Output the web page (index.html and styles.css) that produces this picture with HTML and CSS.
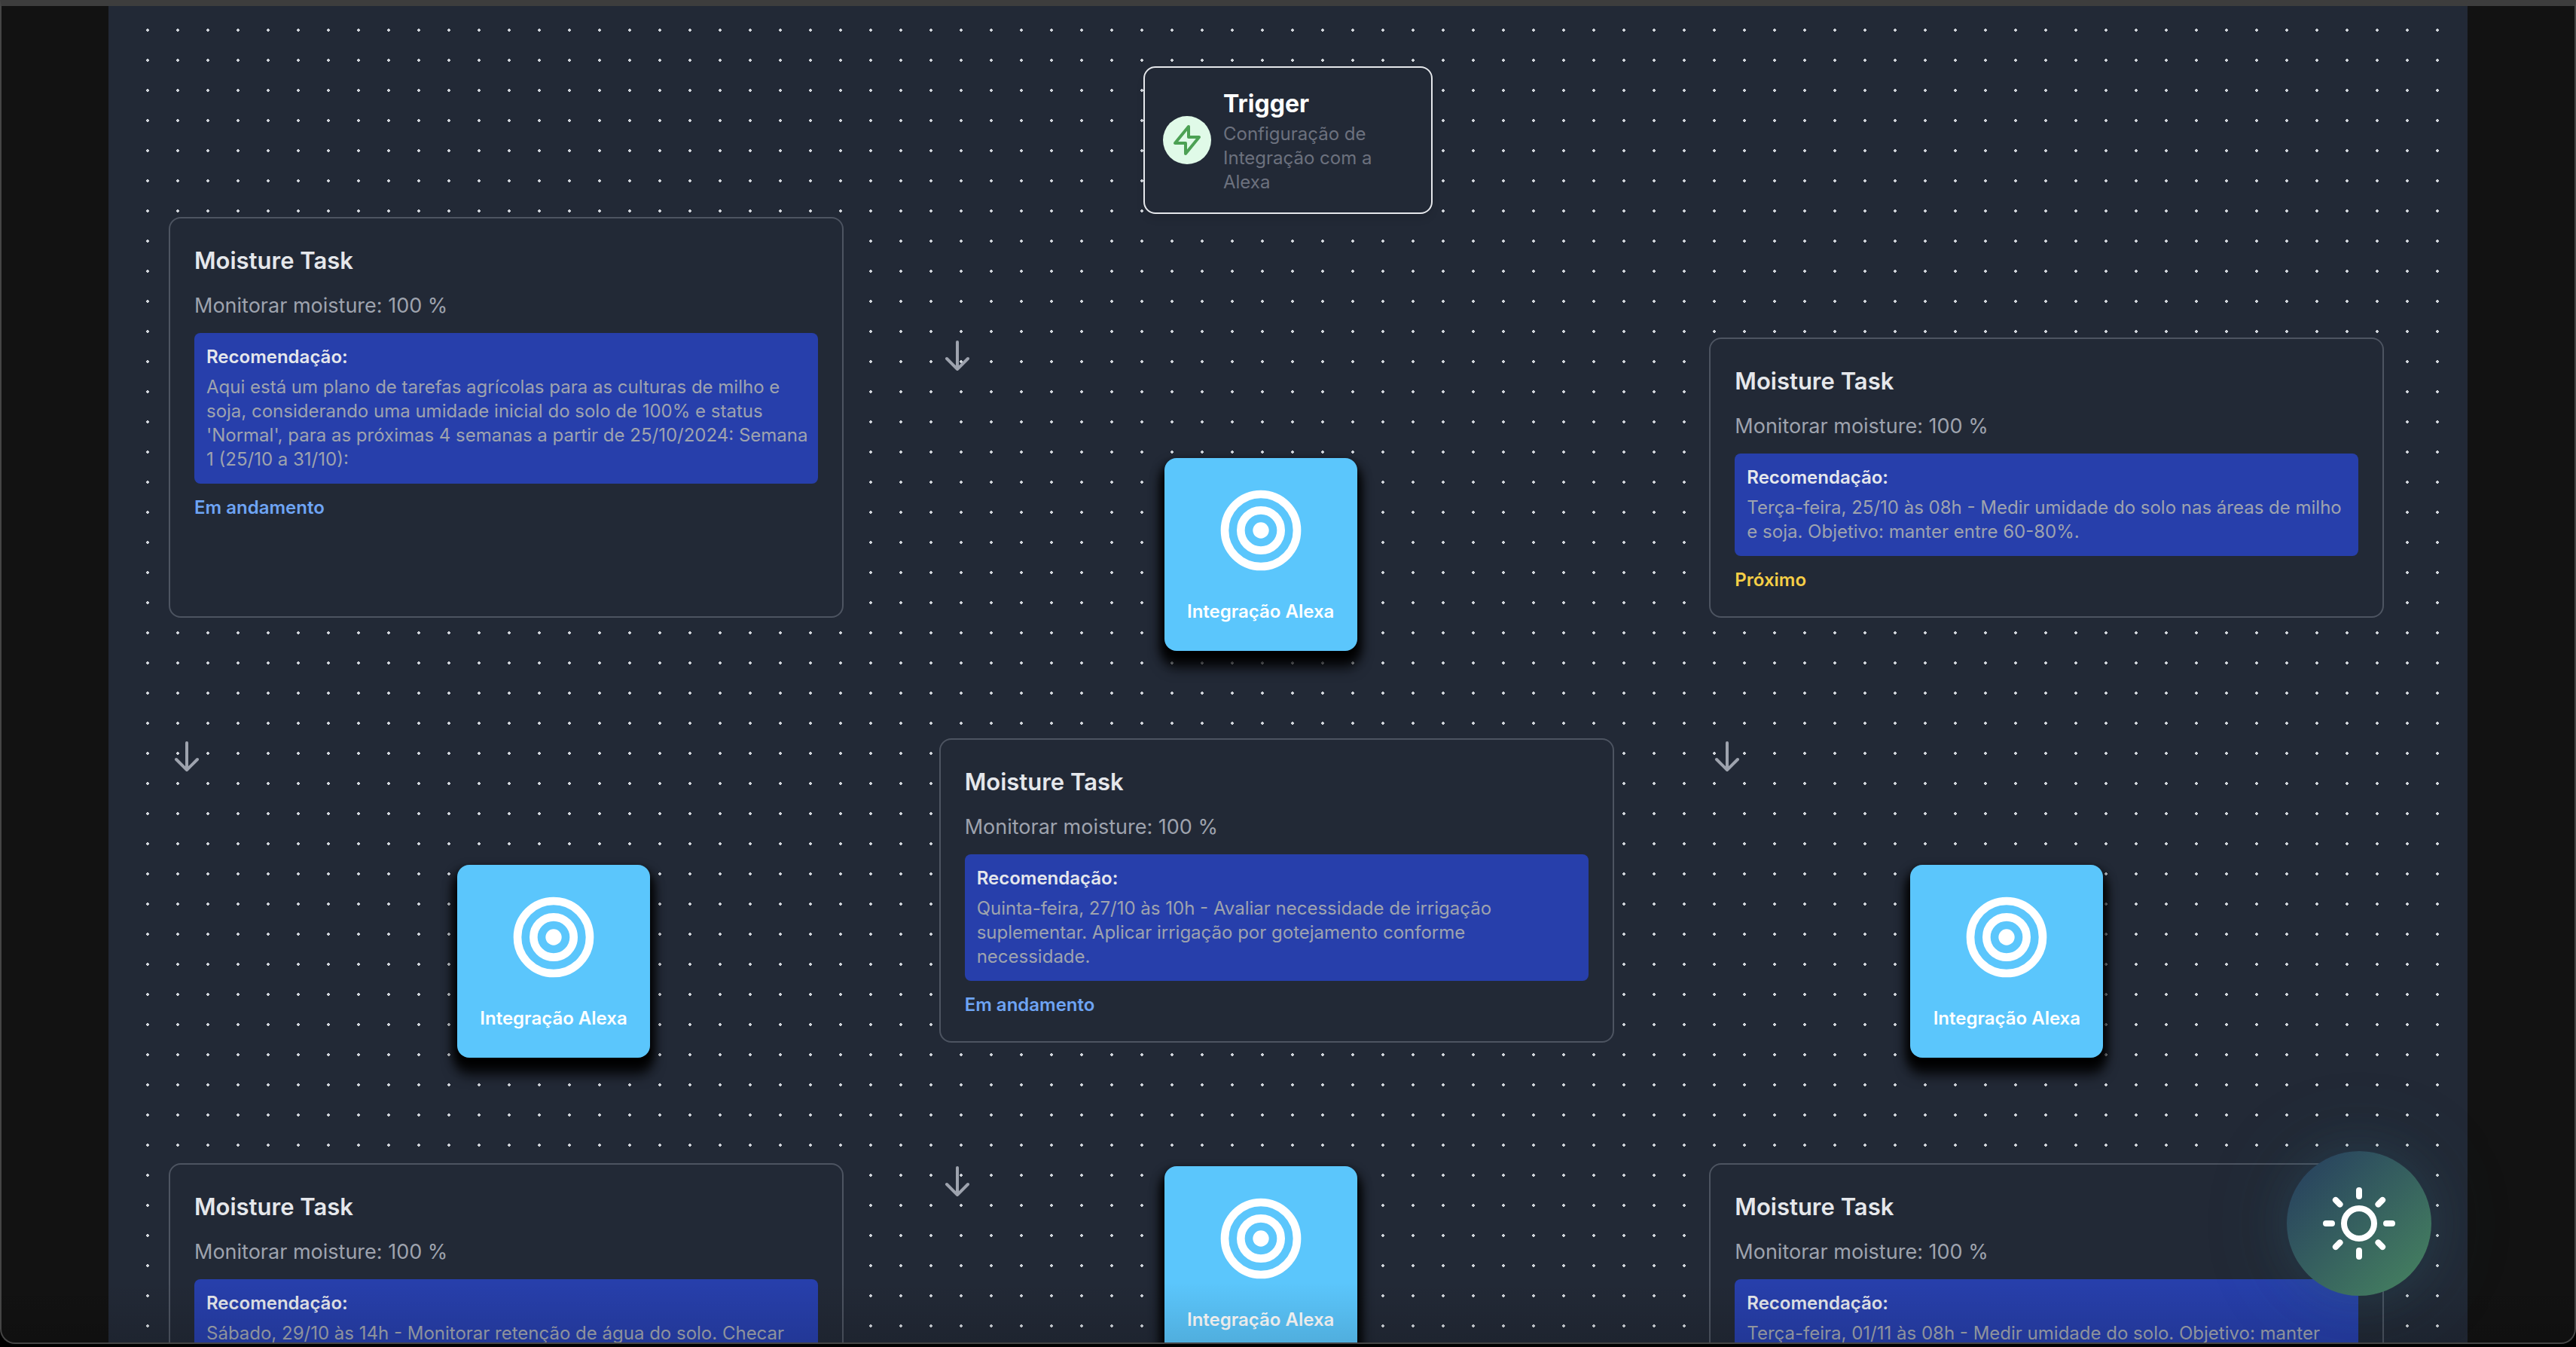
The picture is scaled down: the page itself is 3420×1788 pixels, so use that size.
FILE: index.html
```
<!DOCTYPE html>
<html lang="pt-BR">
<head>
<meta charset="utf-8">
<meta name="viewport" content="width=device-width, initial-scale=1">
<title>Fluxo de tarefas</title>
<link rel="stylesheet" href="styles.css">
</head>
<body>
<svg class="sprite" aria-hidden="true">
  <symbol id="arrow-down" viewBox="0 0 24 24"><path d="M19 14l-7 7m0 0l-7-7m7 7V3" fill="none" stroke="currentColor" stroke-width="2" stroke-linecap="round" stroke-linejoin="round"/></symbol>
  <symbol id="target" viewBox="0 0 24 24"><g fill="none" stroke="currentColor" stroke-width="2"><circle cx="12" cy="12" r="9"/><circle cx="12" cy="12" r="5"/></g><circle cx="12" cy="12" r="2" fill="currentColor"/></symbol>
</svg>
<div class="window">
  <main class="panel">
    <div class="canvas">
      <section class="trigger">
        <span class="trigger-icon">
          <svg viewBox="0 0 24 24" aria-hidden="true"><path d="M13 10V3L4 14h7v7l9-11h-7z" fill="none" stroke="currentColor" stroke-width="2" stroke-linecap="round" stroke-linejoin="round"/></svg>
        </span>
        <div>
          <h2 class="trigger-title">Trigger</h2>
          <p class="trigger-text">Configuração de Integração com a Alexa</p>
        </div>
      </section>

      <div class="flow">
        <article class="card">
          <h3 class="card-title">Moisture Task</h3>
          <p class="card-metric">Monitorar moisture: 100 %</p>
          <div class="advice">
            <h4 class="advice-title">Recomendação:</h4>
            <p class="advice-text">Aqui está um plano de tarefas agrícolas para as culturas de milho e soja, considerando uma umidade inicial do solo de 100% e status 'Normal', para as próximas 4 semanas a partir de 25/10/2024: Semana 1 (25/10 a 31/10):</p>
          </div>
          <p class="status status-active">Em andamento</p>
        </article>
        <div class="link link-low">
          <svg class="arrow" aria-hidden="true"><use href="#arrow-down"/></svg>
          <div class="node node-first"><svg class="node-icon" aria-hidden="true"><use href="#target"/></svg><span class="node-label">Integração Alexa</span></div>
        </div>
        <article class="card card-low">
          <h3 class="card-title">Moisture Task</h3>
          <p class="card-metric">Monitorar moisture: 100 %</p>
          <div class="advice">
            <h4 class="advice-title">Recomendação:</h4>
            <p class="advice-text">Terça-feira, 25/10 às 08h - Medir umidade do solo nas áreas de milho e soja. Objetivo: manter entre 60-80%.</p>
          </div>
          <p class="status status-next">Próximo</p>
        </article>

        <div class="link">
          <svg class="arrow" aria-hidden="true"><use href="#arrow-down"/></svg>
          <div class="node node-left"><svg class="node-icon" aria-hidden="true"><use href="#target"/></svg><span class="node-label">Integração Alexa</span></div>
        </div>
        <article class="card">
          <h3 class="card-title">Moisture Task</h3>
          <p class="card-metric">Monitorar moisture: 100 %</p>
          <div class="advice">
            <h4 class="advice-title">Recomendação:</h4>
            <p class="advice-text">Quinta-feira, 27/10 às 10h - Avaliar necessidade de irrigação suplementar. Aplicar irrigação por gotejamento conforme necessidade.</p>
          </div>
          <p class="status status-active">Em andamento</p>
        </article>
        <div class="link">
          <svg class="arrow" aria-hidden="true"><use href="#arrow-down"/></svg>
          <div class="node node-right"><svg class="node-icon" aria-hidden="true"><use href="#target"/></svg><span class="node-label">Integração Alexa</span></div>
        </div>

        <article class="card">
          <h3 class="card-title">Moisture Task</h3>
          <p class="card-metric">Monitorar moisture: 100 %</p>
          <div class="advice">
            <h4 class="advice-title">Recomendação:</h4>
            <p class="advice-text">Sábado, 29/10 às 14h - Monitorar retenção de água do solo. Checar</p>
          </div>
        </article>
        <div class="link">
          <svg class="arrow" aria-hidden="true"><use href="#arrow-down"/></svg>
          <div class="node node-last"><svg class="node-icon" aria-hidden="true"><use href="#target"/></svg><span class="node-label">Integração Alexa</span></div>
        </div>
        <article class="card">
          <h3 class="card-title">Moisture Task</h3>
          <p class="card-metric">Monitorar moisture: 100 %</p>
          <div class="advice">
            <h4 class="advice-title">Recomendação:</h4>
            <p class="advice-text">Terça-feira, 01/11 às 08h - Medir umidade do solo. Objetivo: manter</p>
          </div>
        </article>
      </div>
    </div>
  </main>
  <div class="fade"></div>
  <button class="theme-toggle" type="button" aria-label="Alternar tema">
    <svg viewBox="0 0 24 24" aria-hidden="true" fill="none" stroke="currentColor" stroke-width="2" stroke-linecap="round"><circle cx="12" cy="12" r="5"/><path d="M12 1v2M12 21v2M4.22 4.22l1.42 1.42M18.36 18.36l1.42 1.42M1 12h2M21 12h2M4.22 19.78l1.42-1.42M18.36 5.64l1.42-1.42"/></svg>
  </button>
</div>
</body>
</html>
```
FILE: styles.css
```
* { box-sizing: border-box; margin: 0; }

body {
  height: 100vh;
  padding-bottom: 4px;
  overflow: hidden;
  background: #000;
  color: #e5e7eb;
  font-family: Inter, "Liberation Sans", sans-serif;
  font-size: 24px;
  line-height: 32px;
}

.sprite { position: absolute; width: 0; height: 0; }

.window {
  position: relative;
  height: 100%;
  overflow: hidden;
  border: 2px solid #454545;
  border-top: 8px solid #3d3d3d;
  border-radius: 0 0 20px 20px;
  background: #121212;
}

.panel {
  margin: 0 142px;
  padding: 0 32px;
  background: #222936;
}

.canvas {
  padding: 80px 48px;
  background-image: radial-gradient(circle, #d1d5db 2px, transparent 2px);
  background-size: 40px 40px;
  background-position: 0 12px;
}

.trigger {
  display: flex;
  align-items: center;
  gap: 16px;
  width: 384px;
  margin: 0 auto 4px;
  padding: 24px;
  border: 2px solid #e5e7eb;
  border-radius: 16px;
  background: #222936;
  box-shadow: 0 8px 12px -2px rgba(0, 0, 0, 0.1);
}

.trigger-icon {
  display: flex;
  flex: none;
  padding: 8px;
  border-radius: 50%;
  background: #e0fae8;
  color: #4ca154;
}

.trigger-icon svg { width: 48px; height: 48px; }

.trigger-title {
  color: #fff;
  font-size: 32px;
  font-weight: 700;
  line-height: 48px;
}

.trigger-text { color: #6c717e; }

.flow {
  display: grid;
  grid-template-columns: repeat(3, 1fr);
  gap: 160px 96px;
}

.card {
  width: 100%;
  max-width: 896px;
  padding: 32px;
  border: 2px solid #4d5461;
  border-radius: 16px;
  background: #222936;
}

.card-low, .link-low { margin-top: 160px; }

.card-title {
  margin-bottom: 16px;
  font-size: 31px;
  font-weight: 600;
  line-height: 48px;
}

.card-metric {
  margin-bottom: 16px;
  color: #9ea3ae;
  font-size: 27px;
  line-height: 40px;
}

.advice {
  margin-bottom: 16px;
  padding: 16px 8px 16px 16px;
  border-radius: 8px;
  background: #273fab;
}

.advice-title {
  margin-bottom: 8px;
  font-size: 24px;
  font-weight: 600;
}

.advice-text { color: #9ea3ae; }

.status { font-weight: 600; }
.status-active { color: #6ea4f4; }
.status-next { color: #f5ce46; }

/* A link cell holds its arrow; the node floats freely over the canvas. */
.link { position: relative; color: #9ea3ae; }

.arrow { display: block; width: 48px; height: 48px; }

.node {
  position: absolute;
  display: flex;
  flex-direction: column;
  align-items: center;
  gap: 24px;
  width: 256px;
  padding: 32px 0;
  border-radius: 16px;
  background: #5bc6fc;
  color: #fff;
  box-shadow: 0 10px 14px 4px #000, 0 20px 16px 4px rgba(0, 0, 0, 0.6);
}

.node-first { top: 160px; left: 299px; }
.node-last { top: 4px; left: 299px; }
.node-left { top: 168px; left: 383px; }
.node-right { top: 168px; left: 267px; }

.node-icon { width: 128px; height: 128px; }

.node-label {
  font-weight: 600;
  line-height: 40px;
  white-space: nowrap;
}

.fade {
  position: absolute;
  inset: auto 0 0;
  height: 80px;
  background: linear-gradient(transparent, rgba(0, 0, 0, 0.12));
}

.theme-toggle {
  position: absolute;
  right: 190px;
  bottom: 62px;
  display: flex;
  padding: 48px;
  border: 0;
  border-radius: 50%;
  background: linear-gradient(135deg, #253c5e, #478560);
  color: #fff;
  box-shadow: 0 0 120px rgba(50, 110, 110, 0.2), 0 0 60px rgba(50, 90, 120, 0.25);
}

.theme-toggle svg { width: 96px; height: 96px; }
```
